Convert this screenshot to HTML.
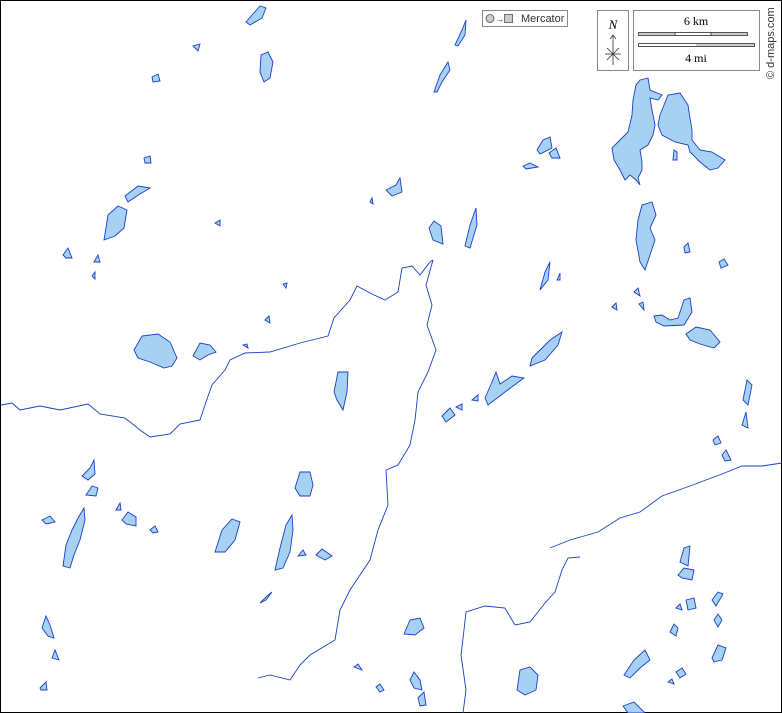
<!DOCTYPE html>
<html><head><style>
html,body{margin:0;padding:0;background:#fff}
svg{display:block}
</style></head><body>
<svg width="782" height="713" viewBox="0 0 782 713" xmlns="http://www.w3.org/2000/svg">
<rect x="0.5" y="0.5" width="781" height="712" fill="#fff" stroke="#000"/>
<g fill="none" stroke="#1a3fc4" stroke-width="0.9">
<polyline points="1,405 12,403 20,410 40,406 60,410 88,404 100,414 125,418 140,430 150,437 170,434 180,424 200,420 206,402 212,385 225,370 230,360 245,353 270,352 300,343 328,336 334,318 350,300 357,286 372,294 385,300 398,292 402,268 412,266 420,275 430,262 433,260"/>
<polyline points="433,260 426,285 432,305 427,325 436,350 428,372 418,392 415,420 410,445 398,465 386,470 388,505 378,530 370,560 350,590 340,610 335,640 310,655 300,665 290,680 270,675 258,678"/>
<polyline points="550,548 570,540 598,532 620,518 640,512 662,496 690,486 722,474 742,466 762,466 782,463"/>
<polyline points="463,713 466,690 461,655 464,630 466,612 485,606 505,608 515,625 530,622 545,603 555,592 562,570 568,558 580,557"/>
</g>
<g fill="#a6d1f3" stroke="#1a3fc4" stroke-width="0.9">
<path d="M246,22 252,15 260,6 266,8 262,18 250,25Z"/>
<path d="M261,55 268,52 273,62 270,78 264,82 260,72Z"/>
<path d="M193,46 200,44 198,51Z"/>
<path d="M152,77 158,74 160,81 153,82Z"/>
<path d="M455,45 462,30 466,20 465,35 458,46Z"/>
<path d="M434,92 440,75 448,62 450,70 442,82 437,92Z"/>
<path d="M144,158 150,156 151,163 145,163Z"/>
<path d="M104,240 108,215 118,206 127,210 124,228 115,236Z"/>
<path d="M125,196 138,186 150,188 140,194 128,202Z"/>
<path d="M63,255 68,248 72,258 66,258Z"/>
<path d="M94,262 98,255 100,262Z"/>
<path d="M92,276 95,272 95,279Z"/>
<path d="M215,223 220,220 220,226Z"/>
<path d="M386,190 396,185 400,178 402,192 392,196Z"/>
<path d="M370,202 372,198 373,204Z"/>
<path d="M429,228 434,221 441,226 443,244 433,240Z"/>
<path d="M465,246 470,225 476,208 477,225 470,248Z"/>
<path d="M537,150 543,140 550,137 552,148 540,154Z"/>
<path d="M549,153 556,148 560,158 552,158Z"/>
<path d="M523,166 530,163 538,167 526,169Z"/>
<path d="M283,284 287,283 286,288Z"/>
<path d="M265,320 269,316 270,323Z"/>
<path d="M134,350 142,336 158,334 170,342 177,358 172,366 164,368 150,362 138,358Z"/>
<path d="M193,356 200,343 210,345 216,352 208,355 200,360Z"/>
<path d="M243,345 247,344 248,348Z"/>
<path d="M334,392 338,372 348,372 347,392 343,410 337,400Z"/>
<path d="M540,290 545,272 550,262 548,280Z"/>
<path d="M557,280 560,273 560,280Z"/>
<path d="M532,358 550,340 562,332 558,345 545,360 530,366Z"/>
<path d="M485,398 492,382 496,372 500,384 512,376 524,378 505,392 488,405Z"/>
<path d="M442,416 450,408 455,415 446,422Z"/>
<path d="M456,407 462,404 462,410Z"/>
<path d="M472,400 478,395 478,401Z"/>
<path d="M636,85 640,80 648,78 650,90 662,95 658,100 650,98 652,110 655,125 653,135 648,145 640,150 642,162 642,170 638,178 640,185 636,180 630,175 625,180 620,170 614,160 612,148 620,140 628,132 632,115 633,100Z"/>
<path d="M658,125 660,115 668,95 680,93 688,105 690,118 692,130 692,140 700,150 712,152 725,160 718,168 710,170 700,162 690,152 688,145 675,142 662,135Z"/>
<path d="M673,160 674,150 677,152 677,160Z"/>
<path d="M638,220 642,205 652,202 656,215 650,228 655,240 650,255 645,270 640,262 636,240Z"/>
<path d="M684,247 688,243 690,252 685,253Z"/>
<path d="M719,262 724,259 728,265 721,268Z"/>
<path d="M612,307 616,303 617,310Z"/>
<path d="M634,292 638,288 640,296Z"/>
<path d="M639,304 643,302 644,310Z"/>
<path d="M654,316 662,315 670,320 678,318 684,300 690,298 692,312 684,325 664,326 656,322Z"/>
<path d="M686,334 696,327 710,330 720,342 714,348 700,344 690,340Z"/>
<path d="M743,400 747,380 752,385 748,405Z"/>
<path d="M742,425 746,412 748,428Z"/>
<path d="M713,440 718,436 721,443 715,445Z"/>
<path d="M722,455 726,450 731,460 725,461Z"/>
<path d="M82,476 90,468 94,460 95,474 88,480Z"/>
<path d="M86,495 92,486 98,488 96,496Z"/>
<path d="M42,520 50,516 55,522 46,524Z"/>
<path d="M63,566 66,545 72,530 78,518 84,508 85,520 80,540 74,555 70,568Z"/>
<path d="M116,510 120,503 121,510Z"/>
<path d="M122,520 128,512 136,517 136,526 126,524Z"/>
<path d="M150,530 155,526 158,532 153,533Z"/>
<path d="M295,488 300,472 310,472 313,485 310,496 300,496Z"/>
<path d="M215,552 222,530 232,519 240,522 235,540 225,552Z"/>
<path d="M275,570 280,548 286,525 292,515 293,530 290,552 283,568Z"/>
<path d="M298,556 303,550 306,555Z"/>
<path d="M316,555 322,549 332,556 325,560Z"/>
<path d="M260,603 267,596 272,592 266,600Z"/>
<path d="M42,628 46,616 50,625 54,638 48,636Z"/>
<path d="M52,658 55,650 59,660Z"/>
<path d="M40,688 46,682 47,690 41,690Z"/>
<path d="M404,634 410,620 420,618 424,628 415,635Z"/>
<path d="M354,667 358,664 362,670Z"/>
<path d="M410,680 414,672 420,680 422,690 414,688Z"/>
<path d="M418,698 424,692 426,705 420,706Z"/>
<path d="M376,687 380,684 384,690 380,692Z"/>
<path d="M517,690 520,670 530,667 538,675 536,690 525,695Z"/>
<path d="M624,675 634,660 645,650 650,660 640,668 630,678Z"/>
<path d="M623,706 634,702 645,713 628,713Z"/>
<path d="M680,562 684,548 690,546 688,566Z"/>
<path d="M678,575 684,568 694,570 692,580 682,578Z"/>
<path d="M686,600 694,598 696,608 688,610Z"/>
<path d="M676,608 680,604 682,610Z"/>
<path d="M712,600 718,592 723,594 716,606Z"/>
<path d="M670,632 674,624 678,628 676,636Z"/>
<path d="M714,620 718,614 722,620 718,627Z"/>
<path d="M712,658 718,645 726,648 722,660 714,662Z"/>
<path d="M676,672 682,668 686,674 680,678Z"/>
<path d="M668,682 672,679 674,684Z"/>
</g>
<g font-family="Liberation Sans, sans-serif" font-size="11">
<rect x="482.5" y="10.5" width="85" height="16" fill="#fff" stroke="#888"/>
<circle cx="490" cy="18.5" r="4" fill="#ccc" stroke="#555" stroke-width="0.8"/>
<text x="495" y="22" font-size="9" fill="#333">→</text>
<rect x="504.5" y="14.5" width="8" height="8" fill="#ccc" stroke="#555" stroke-width="0.8"/>
<text x="521" y="22" fill="#333">Mercator</text>
</g>
<rect x="597.5" y="10.5" width="31" height="60" fill="#fff" stroke="#888"/>
<text x="613" y="29" font-family="Liberation Serif, serif" font-style="italic" font-size="13" text-anchor="middle">N</text>
<g stroke="#333" stroke-width="0.8">
<line x1="613" y1="35" x2="613" y2="65"/>
<line x1="605" y1="54" x2="621" y2="54"/>
<line x1="607" y1="48" x2="619" y2="60"/>
<line x1="619" y1="48" x2="607" y2="60"/>
<polyline points="610,39 613,35 616,39" fill="none"/>
</g>
<rect x="633.5" y="10.5" width="126" height="60" fill="#fff" stroke="#888"/>
<text x="696" y="25" font-family="Liberation Serif, serif" font-size="12" text-anchor="middle">6 km</text>
<rect x="638.5" y="32.5" width="109" height="3" fill="#ccc" stroke="#333" stroke-width="0.8"/>
<rect x="675" y="33" width="36" height="2" fill="#fff"/>
<line x1="675" y1="32" x2="675" y2="36" stroke="#333" stroke-width="0.8"/>
<line x1="711" y1="32" x2="711" y2="36" stroke="#333" stroke-width="0.8"/>
<rect x="638.5" y="43.5" width="116" height="3" fill="#ccc" stroke="#333" stroke-width="0.8"/>
<rect x="639" y="44" width="57" height="2" fill="#fff"/>
<text x="696" y="62" font-family="Liberation Serif, serif" font-size="12" text-anchor="middle">4 mi</text>
<text transform="translate(774,79) rotate(-90)" font-family="Liberation Sans, sans-serif" font-size="11" fill="#333">© d-maps.com</text>
</svg>
</body></html>
